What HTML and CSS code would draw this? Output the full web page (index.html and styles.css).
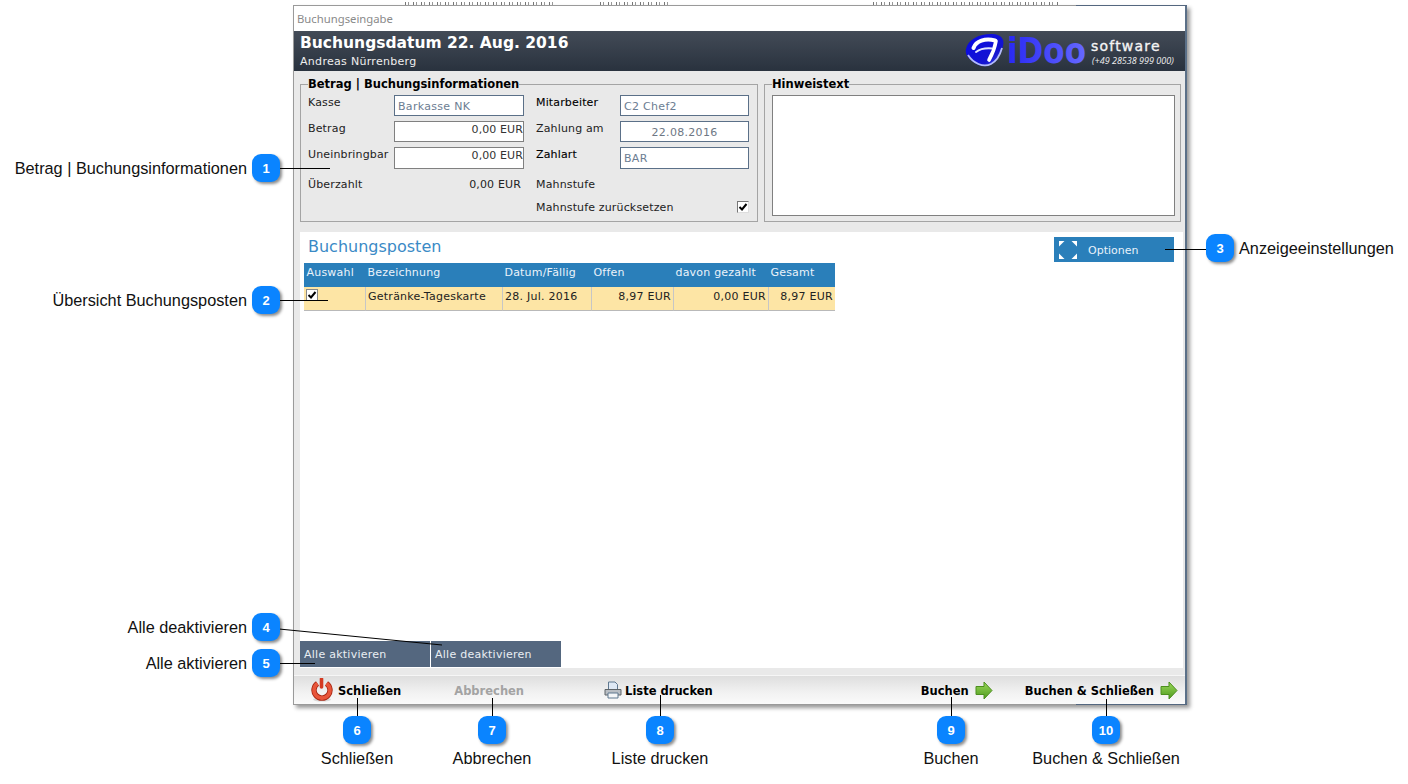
FILE: index.html
```html
<!DOCTYPE html>
<html lang="en">
<head>
    <meta charset="UTF-8">
    <title>Buchungseingabe</title>
    <link rel="stylesheet" href="styles.css">
</head>
<body>
<div class="page">
    <div class="behind behind-a"></div>
    <div class="behind behind-b"></div>
    <div class="behind behind-c"></div>

    <div class="window">
        <div class="titlebar">Buchungseingabe</div>

        <header class="head">
            <div>
                <h1>Buchungsdatum 22. Aug. 2016</h1>
                <p>Andreas Nürrenberg</p>
            </div>
            <svg class="logo" width="214" height="44" viewBox="0 -3 214 44">
                <defs>
                    <linearGradient id="blob" x1="0" y1="0" x2="1" y2="1">
                        <stop offset="0" stop-color="#0808e8"/>
                        <stop offset="0.7" stop-color="#1414d0"/>
                        <stop offset="1" stop-color="#4a5cf0"/>
                    </linearGradient>
                    <linearGradient id="doo" x1="0" y1="0" x2="1" y2="0">
                        <stop offset="0" stop-color="#2828f4"/>
                        <stop offset="1" stop-color="#6668ff"/>
                    </linearGradient>
                </defs>
                <path d="M2 17 C4 8 14 2 28 2 C37 2 41 7 39 14 C37 22 33 30 26 33 C20 36 12 33 7 28 C3 25 1 21 2 17 Z" fill="url(#blob)"/>
                <path d="M4 23 C9 31 19 36 27 32 C33 29 36 23 38 16" fill="none" stroke="#b4bcf8" stroke-width="1.8"/>
                <path d="M31 8.5 C21 6 12 9 9.5 16" fill="none" stroke="#fff" stroke-width="4" stroke-linecap="round"/>
                <path d="M12 20 C16 17 22 16 28 16.5" fill="none" stroke="#dfe4ff" stroke-width="2" stroke-linecap="round"/>
                <path d="M32 9 C31 15 29 21 25 28" fill="none" stroke="#fff" stroke-width="3.6" stroke-linecap="round"/>
                <text class="logo-idoo" transform="translate(43 31) scale(1 1.15)">iDoo</text>
                <text class="logo-soft" x="127" y="19">software</text>
                <text class="logo-tel" x="128" y="32">(+49 28538 999 000)</text>
            </svg>
        </header>

        <main class="body">
            <div class="top-row">
                <fieldset class="box box-info">
                    <legend>Betrag | Buchungsinformationen</legend>
                    <div class="form">
                        <span class="lbl">Kasse</span>
                        <div class="field field-blue">Barkasse NK</div>
                        <span class="lbl lbl-strong">Mitarbeiter</span>
                        <div class="field field-blue">C2 Chef2</div>

                        <span class="lbl">Betrag</span>
                        <div class="field field-num">0,00 EUR</div>
                        <span class="lbl">Zahlung am</span>
                        <div class="field field-blue field-date">22.08.2016</div>

                        <span class="lbl">Uneinbringbar</span>
                        <div class="field field-num">0,00 EUR</div>
                        <span class="lbl lbl-strong">Zahlart</span>
                        <div class="field field-blue">BAR</div>

                        <span class="lbl lbl-mid">Überzahlt</span>
                        <span class="lbl lbl-mid lbl-sum">0,00 EUR</span>
                        <span class="lbl lbl-mid wide">Mahnstufe</span>

                        <div class="reset">
                            <span class="lbl">Mahnstufe zurücksetzen</span>
                            <span class="check"><svg width="10" height="10" viewBox="0 0 10 10"><path d="M1.5 5 L4 7.5 L8.5 2" fill="none" stroke="#000" stroke-width="2"/></svg></span>
                        </div>
                    </div>
                </fieldset>
                <fieldset class="box box-note">
                    <legend>Hinweistext</legend>
                    <div class="note"></div>
                </fieldset>
            </div>

            <section class="panel">
                <div class="panel-head">
                    <h2>Buchungsposten</h2>
                    <div class="btn-options">
                        <svg width="18" height="18" viewBox="0 0 18 18" fill="#fff">
                            <path d="M0 0 H5.5 L0 5.5 Z"/>
                            <path d="M18 0 H12.5 L18 5.5 Z"/>
                            <path d="M0 18 H5.5 L0 12.5 Z"/>
                            <path d="M18 18 H12.5 L18 12.5 Z"/>
                        </svg>
                        <span>Optionen</span>
                    </div>
                </div>

                <table class="items">
                    <colgroup>
                        <col class="c1"><col class="c2"><col class="c3"><col class="c4"><col class="c5"><col class="c6">
                    </colgroup>
                    <thead>
                        <tr>
                            <th>Auswahl</th>
                            <th>Bezeichnung</th>
                            <th>Datum/Fällig</th>
                            <th>Offen</th>
                            <th>davon gezahlt</th>
                            <th>Gesamt</th>
                        </tr>
                    </thead>
                    <tbody>
                        <tr>
                            <td><span class="check check-row"><svg width="10" height="10" viewBox="0 0 10 10"><path d="M1.5 5 L4 7.5 L8.5 2" fill="none" stroke="#000" stroke-width="2"/></svg></span></td>
                            <td>Getränke-Tageskarte</td>
                            <td>28. Jul. 2016</td>
                            <td class="num">8,97 EUR</td>
                            <td class="num">0,00 EUR</td>
                            <td class="num">8,97 EUR</td>
                        </tr>
                    </tbody>
                </table>

                <div class="bulk">
                    <div class="bulk-btn">Alle aktivieren</div>
                    <div class="bulk-btn">Alle deaktivieren</div>
                </div>
            </section>
        </main>

        <footer class="foot">
            <svg class="ico-power" width="22" height="24" viewBox="0 0 22 24">
                <ellipse cx="11" cy="21.5" rx="9" ry="2" fill="#d8d8d8"/>
                <path d="M6.5 5.5 A8 8 0 1 0 15.5 5.5" fill="none" stroke="#a82814" stroke-width="5.4"/>
                <path d="M6.5 5.5 A8 8 0 1 0 15.5 5.5" fill="none" stroke="#e8553a" stroke-width="3.6"/>
                <path d="M10.5 1 V9" stroke="#d43a22" stroke-width="3.6" stroke-linecap="round"/>
            </svg>
            <span class="act act-close">Schließen</span>
            <span class="act act-off">Abbrechen</span>
            <svg class="ico-print" width="18" height="18" viewBox="0 0 18 18">
                <path d="M4.5 1 H11 L13.5 3.5 V9 H4.5 Z" fill="#dfe9f5" stroke="#5f7890"/>
                <path d="M1 8.5 H17 V14 H1 Z" fill="#b9bec4" stroke="#5e6468"/>
                <path d="M4 12 H14 V17 H4 Z" fill="#f4f6f8" stroke="#5f7890"/>
            </svg>
            <span class="act act-print">Liste drucken</span>
            <span class="act act-book">Buchen</span>
            <svg class="ico-arrow" width="18" height="19" viewBox="0 0 18 19">
                <defs>
                    <linearGradient id="arrow" x1="0" y1="0" x2="0" y2="1">
                        <stop offset="0" stop-color="#9ad85a"/>
                        <stop offset="1" stop-color="#4f9a1e"/>
                    </linearGradient>
                </defs>
                <path d="M1 5.5 H9 V1 L17 9.5 L9 18 V13.5 H1 Z" fill="url(#arrow)" stroke="#4c8f1e"/>
            </svg>
            <span class="act act-bookclose">Buchen &amp; Schließen</span>
            <svg class="ico-arrow" width="18" height="19" viewBox="0 0 18 19">
                <path d="M1 5.5 H9 V1 L17 9.5 L9 18 V13.5 H1 Z" fill="url(#arrow)" stroke="#4c8f1e"/>
            </svg>
        </footer>
    </div>

    <!-- Callouts -->
    <svg class="lines" width="1408" height="784">
        <path d="M279 168.5 H330"/>
        <path d="M279 300.5 H328"/>
        <path d="M1165 249.5 H1206"/>
        <path d="M279 629 L442 645"/>
        <path d="M279 663.5 H315"/>
        <path d="M357.5 698 V716"/>
        <path d="M492.5 698 V716"/>
        <path d="M660.5 695 V716"/>
        <path d="M951.5 697 V716"/>
        <path d="M1106.5 699 V716"/>
    </svg>

    <span class="badge b1">1</span>
    <span class="badge b2">2</span>
    <span class="badge b3">3</span>
    <span class="badge b4">4</span>
    <span class="badge b5">5</span>
    <span class="badge b6">6</span>
    <span class="badge b7">7</span>
    <span class="badge b8">8</span>
    <span class="badge b9">9</span>
    <span class="badge b10">10</span>

    <span class="note-l l1">Betrag | Buchungsinformationen</span>
    <span class="note-l l2">Übersicht Buchungsposten</span>
    <span class="note-r l3">Anzeigeeinstellungen</span>
    <span class="note-l l4">Alle deaktivieren</span>
    <span class="note-l l5">Alle aktivieren</span>
    <span class="note-c l6">Schließen</span>
    <span class="note-c l7">Abbrechen</span>
    <span class="note-c l8">Liste drucken</span>
    <span class="note-c l9">Buchen</span>
    <span class="note-c l10">Buchen &amp; Schließen</span>
</div>
</body>
</html>
```

FILE: styles.css
```css
* {
    box-sizing: border-box;
}

body {
    margin: 0;
    background-color: #fff;
    font-family: "DejaVu Sans", Verdana, sans-serif;
    font-size: 11px;
    color: #222;
}

.page {
    position: relative;
    width: 1408px;
    height: 784px;
    overflow: hidden;
}

/* bottoms of letters from the page behind the window */
.behind {
    position: absolute;
    top: 2px;
    height: 3px;
    background: repeating-linear-gradient(90deg, #777 0 1px, transparent 1px 3px, #999 3px 4px, transparent 4px 8px);
}

.behind-a { left: 405px; width: 150px; }
.behind-b { left: 600px; width: 72px; }
.behind-c { left: 873px; width: 186px; }

/* window */
.window {
    position: absolute;
    left: 293px;
    top: 5px;
    width: 894px;
    height: 700px;
    display: flex;
    flex-direction: column;
    background-color: #fff;
    border: 1px solid #9a9a9a;
    border-right: 2px solid #5b7088;
    box-shadow: 3px 3px 4px rgba(0, 0, 0, 0.4);
}

.window::before,
.window::after {
    content: "";
    position: absolute;
    left: 782px;
    right: -2px;
    height: 1px;
    background-color: #54677f;
}

.window::before { top: -1px; }
.window::after { bottom: -1px; }

.titlebar {
    height: 25px;
    padding: 5px 3px 0;
    font-family: "Noto Sans", sans-serif;
    font-size: 11.3px;
    line-height: 15px;
    color: #8a8a8a;
}

.head {
    height: 40px;
    display: flex;
    justify-content: space-between;
    padding: 3px 7px 0 6px;
    background: linear-gradient(#434b57, #29323e);
    color: #fff;
}

.head h1 {
    margin: 0;
    font-size: 15.5px;
    line-height: 19px;
    font-weight: bold;
}

.head p {
    margin: 2px 0 0;
    font-size: 11px;
    line-height: 14px;
    letter-spacing: 0.3px;
    color: #eee;
}

.logo {
    margin-top: -5px;
}

.logo-idoo {
    font-size: 31px;
    font-weight: bold;
    fill: url(#doo);
}

.logo-soft {
    font-family: "DejaVu Sans", sans-serif;
    font-size: 14px;
    letter-spacing: 1.2px;
    fill: #f4f4f4;
    stroke: #f4f4f4;
    stroke-width: 0.35px;
}

.logo-tel {
    font-family: "Open Sans", sans-serif;
    font-size: 9px;
    font-style: italic;
    fill: #eee;
}

.body {
    flex: 1;
    display: flex;
    flex-direction: column;
    padding: 7px 2px 7px 6px;
    background-color: #e9e9e9;
}

.top-row {
    display: flex;
    gap: 6px;
    height: 144px;
}

.box {
    margin: 0;
    min-width: 0;
    border: 1px solid #a4a4a4;
    padding: 5px 7px 0;
}

.box legend {
    padding: 0;
    font-size: 11.5px;
    font-weight: bold;
    line-height: 12px;
    color: #000;
}

.box-info { width: 458px; }
.box-note { width: 417px; }

.form {
    display: grid;
    grid-template-columns: 86px 130px 96px 129px;
    grid-template-rows: 21px 21px 22px 20px 16px;
    row-gap: 5px;
}

.form > :nth-child(4n+3) {
    margin-left: 12px;
}

.lbl {
    padding-top: 1px;
    line-height: 14px;
    letter-spacing: 0.15px;
    color: #222;
    white-space: nowrap;
}

.lbl-strong {
    color: #000;
    -webkit-text-stroke: 0.1px #000;
}

.lbl-mid {
    align-self: center;
}

.lbl-sum {
    text-align: right;
    padding-right: 3px;
}

.form .wide {
    grid-column: 3 / 5;
    margin-left: 12px;
}

.reset {
    grid-column: 3 / 5;
    grid-row: 5;
    margin-left: 12px;
    display: flex;
    justify-content: space-between;
    align-items: center;
}

.field {
    border: 1px solid #808080;
    background-color: #fff;
    padding: 1px 3px;
    line-height: 17px;
    letter-spacing: 0.3px;
    white-space: nowrap;
}

.field-blue {
    border-color: #5b7088;
    color: #6c7d92;
    padding-top: 2px;
}

.field-date {
    text-align: center;
    color: #6e7784;
}

.field-num {
    text-align: right;
    padding: 1px 0 0 3px;
    line-height: 14px;
    letter-spacing: 0.1px;
    color: #333;
}

.check {
    width: 12px;
    height: 12px;
    display: flex;
    align-items: center;
    justify-content: center;
    background-color: #fff;
    border: 1px solid #777;
    border-right-color: #ddd;
    border-bottom-color: #ddd;
}

.note {
    width: 403px;
    height: 121px;
    border: 1px solid #808080;
    background-color: #fff;
}

/* list panel */
.panel {
    flex: 1;
    margin-top: 10px;
    display: flex;
    flex-direction: column;
    background-color: #fff;
    padding-bottom: 1px;
}

.panel-head {
    height: 31px;
    display: flex;
    justify-content: space-between;
    padding: 5px 9px 0 8px;
}

.panel-head h2 {
    margin: 0;
    font-size: 16px;
    font-weight: normal;
    line-height: 19px;
    color: #3a8ac6;
}

.btn-options {
    width: 120px;
    height: 25px;
    display: flex;
    align-items: center;
    gap: 11px;
    padding-left: 5px;
    background-color: #2a7fba;
    color: #e8f2fa;
}

.btn-options span {
    padding-top: 2px;
}

.items {
    margin-left: 4px;
    width: 531px;
    table-layout: fixed;
    border-collapse: separate;
    border-spacing: 0;
}

.c1 { width: 61px; }
.c2 { width: 137px; }
.c3 { width: 89px; }
.c4 { width: 82px; }
.c5 { width: 95px; }
.c6 { width: 67px; }

.items th {
    height: 24px;
    padding: 0 2px 5px 2.5px;
    background-color: #2a7fba;
    color: #eaf3fa;
    font-weight: normal;
    letter-spacing: 0.2px;
    text-align: left;
}

.items td {
    height: 24px;
    padding: 0 2px 5px;
    background-color: #fde5a5;
    border-left: 1px solid #c6c6c6;
    border-bottom: 1px solid #b9b9b9;
    color: #222;
    letter-spacing: 0.25px;
    white-space: nowrap;
}

.items td:first-child {
    border-left: 0;
    padding: 0 0 0 2px;
    vertical-align: top;
}

.items td.num {
    text-align: right;
    padding-right: 2px;
}

.check-row {
    margin-top: 2px;
    border-color: #888;
}

.bulk {
    margin-top: auto;
    display: flex;
    gap: 1px;
}

.bulk-btn {
    width: 130px;
    height: 26px;
    padding: 6px 4px 0;
    line-height: 15px;
    letter-spacing: 0.25px;
    background-color: #54677f;
    color: #e9eef3;
}

/* bottom bar */
.foot {
    height: 29px;
    display: flex;
    align-items: center;
    border-top: 1px solid #f6f6f6;
    background: linear-gradient(#dedede, #f2f2f2 60%, #fafafa);
}

.act {
    padding-top: 2px;
    font-weight: bold;
    font-size: 11.5px;
    color: #000;
    white-space: nowrap;
}

.ico-power { margin-left: 17px; }
.act-close { margin-left: 5px; }
.act-off { margin-left: 53px; color: #a3a3a3; }
.ico-print { margin-left: 80px; }
.act-print { margin-left: 3px; }
.act-book { margin-left: auto; }
.ico-arrow { margin-left: 6px; }
.act-bookclose { margin-left: 32px; }
.ico-arrow:last-child { margin-right: 7px; }

/* callouts over the screenshot */
.lines {
    position: absolute;
    left: 0;
    top: 0;
    pointer-events: none;
}

.lines path {
    fill: none;
    stroke: #000;
    stroke-width: 1;
}

.badge {
    position: absolute;
    width: 28px;
    height: 28px;
    display: flex;
    align-items: center;
    justify-content: center;
    border-radius: 9px;
    background-color: #0a84ff;
    box-shadow: 2px 2px 3px rgba(0, 0, 0, 0.45);
    font-family: "Liberation Sans", Arial, sans-serif;
    font-size: 13px;
    font-weight: bold;
    color: #fff;
}

.b1 { left: 252px; top: 154px; }
.b2 { left: 252px; top: 286px; }
.b3 { left: 1206px; top: 234px; }
.b4 { left: 252px; top: 613px; }
.b5 { left: 252px; top: 649px; }
.b6 { left: 343px; top: 716px; }
.b7 { left: 478px; top: 716px; }
.b8 { left: 646px; top: 716px; }
.b9 { left: 937px; top: 716px; }
.b10 { left: 1092px; top: 716px; }

.note-l,
.note-r,
.note-c {
    position: absolute;
    font-family: "Liberation Sans", Arial, sans-serif;
    font-size: 16.3px;
    line-height: 18px;
    color: #111;
    white-space: nowrap;
}

.note-l { right: 1161px; }
.note-c { top: 749px; transform: translateX(-50%); }

.l1 { top: 159px; }
.l2 { top: 291px; }
.l3 { left: 1239px; top: 239px; }
.l4 { top: 618px; }
.l5 { top: 654px; }
.l6 { left: 357px; }
.l7 { left: 492px; }
.l8 { left: 660px; }
.l9 { left: 951px; }
.l10 { left: 1106px; }
```
